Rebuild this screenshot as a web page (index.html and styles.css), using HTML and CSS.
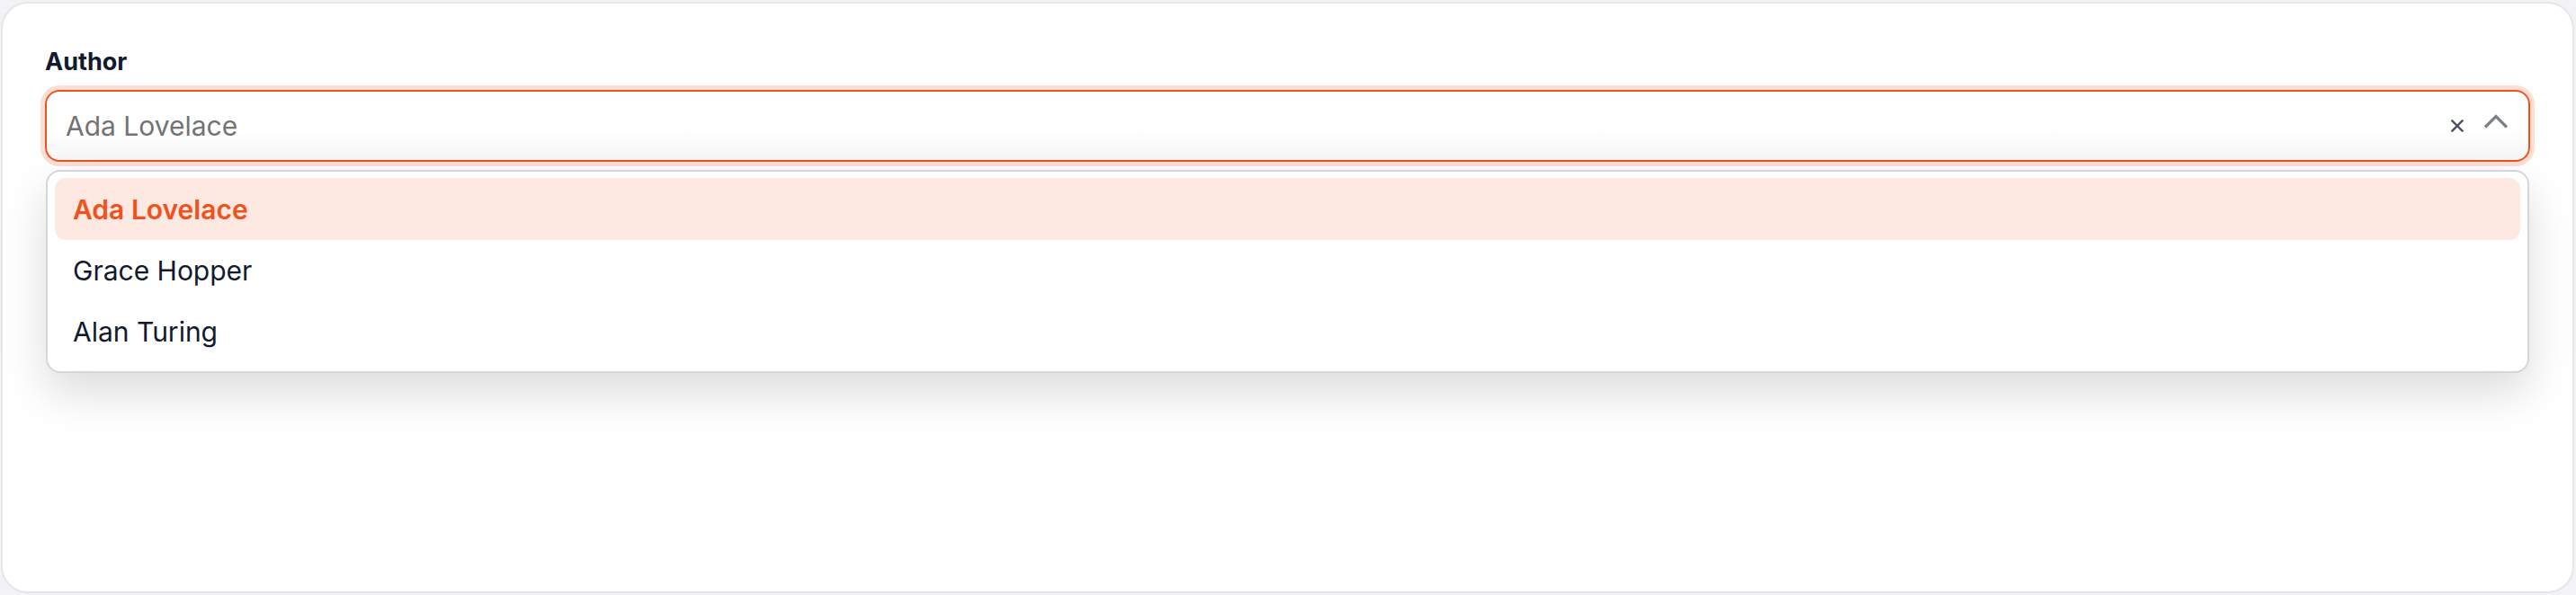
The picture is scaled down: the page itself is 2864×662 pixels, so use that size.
FILE: index.html
```html
<!DOCTYPE html>
<html lang="en">
<head>
<meta charset="utf-8">
<title>Author select</title>
<link rel="stylesheet" href="styles.css">
</head>
<body>
<div class="card">
  <label class="field-label">Author</label>
  <div class="select">
    <div class="select-control">
      <span class="select-value">Ada Lovelace</span>
      <span class="select-icons">
        <svg class="icon-clear" width="14" height="14" viewBox="0 0 14 14" aria-hidden="true">
          <path d="M1.5 1.5 L12.5 12.5 M12.5 1.5 L1.5 12.5" stroke="#4a4f5c" stroke-width="2.4" stroke-linecap="square" fill="none"/>
        </svg>
        <svg class="icon-chevron" width="28" height="18" viewBox="0 0 28 18" aria-hidden="true">
          <polyline points="2,15.5 14,3.5 26,15.5" stroke="#7b808a" stroke-width="3.2" fill="none" stroke-linejoin="miter"/>
        </svg>
      </span>
    </div>
    <ul class="select-menu">
      <li class="option option-active">Ada Lovelace</li>
      <li class="option">Grace Hopper</li>
      <li class="option">Alan Turing</li>
    </ul>
  </div>
</div>
</body>
</html>
```

FILE: styles.css
```css
* { box-sizing: border-box; }

html, body {
  margin: 0;
  background: #f3f3f6;
}

body {
  padding: 2px 2px 2px 1px;
  font-family: Inter, "Noto Sans", sans-serif;
}

.card {
  height: 658px;
  background: #ffffff;
  border: 2px solid #e5e5ea;
  border-radius: 30px;
  padding: 47px 47px 0 47px;
}

.field-label {
  display: block;
  font-size: 27px;
  line-height: 36px;
  font-weight: 700;
  color: #111a2e;
  margin-bottom: 13px;
}

.select {
  position: relative;
}

.select-control {
  height: 80px;
  border: 2px solid #ef521c;
  border-radius: 16px;
  box-shadow: 0 0 0 5px #fbded4;
  background: linear-gradient(#ffffff 55%, #f6f6f6);
  display: flex;
  align-items: center;
  padding: 0 22px 0 21px;
}

.select-value {
  flex: 1;
  font-size: 30px;
  color: #737373;
}

.select-icons {
  display: flex;
  align-items: center;
  gap: 22px;
}

.icon-clear { display: block; }

.icon-chevron {
  display: block;
  margin-bottom: 11px;
}

.select-menu {
  position: absolute;
  top: calc(100% + 9px);
  left: 1px;
  right: 1px;
  margin: 0;
  list-style: none;
  background: #ffffff;
  border: 2px solid #d6d6d8;
  border-radius: 16px;
  padding: 7px 8px 10px;
  box-shadow: 0 22px 50px rgba(0, 0, 0, 0.14);
}

.option {
  height: 68px;
  display: flex;
  align-items: center;
  padding: 0 20px;
  font-size: 30px;
  color: #111a2e;
  border-radius: 12px;
}

.option-active {
  height: 69px;
  background: #fde9e2;
  color: #ef521c;
  font-weight: 600;
}
```
